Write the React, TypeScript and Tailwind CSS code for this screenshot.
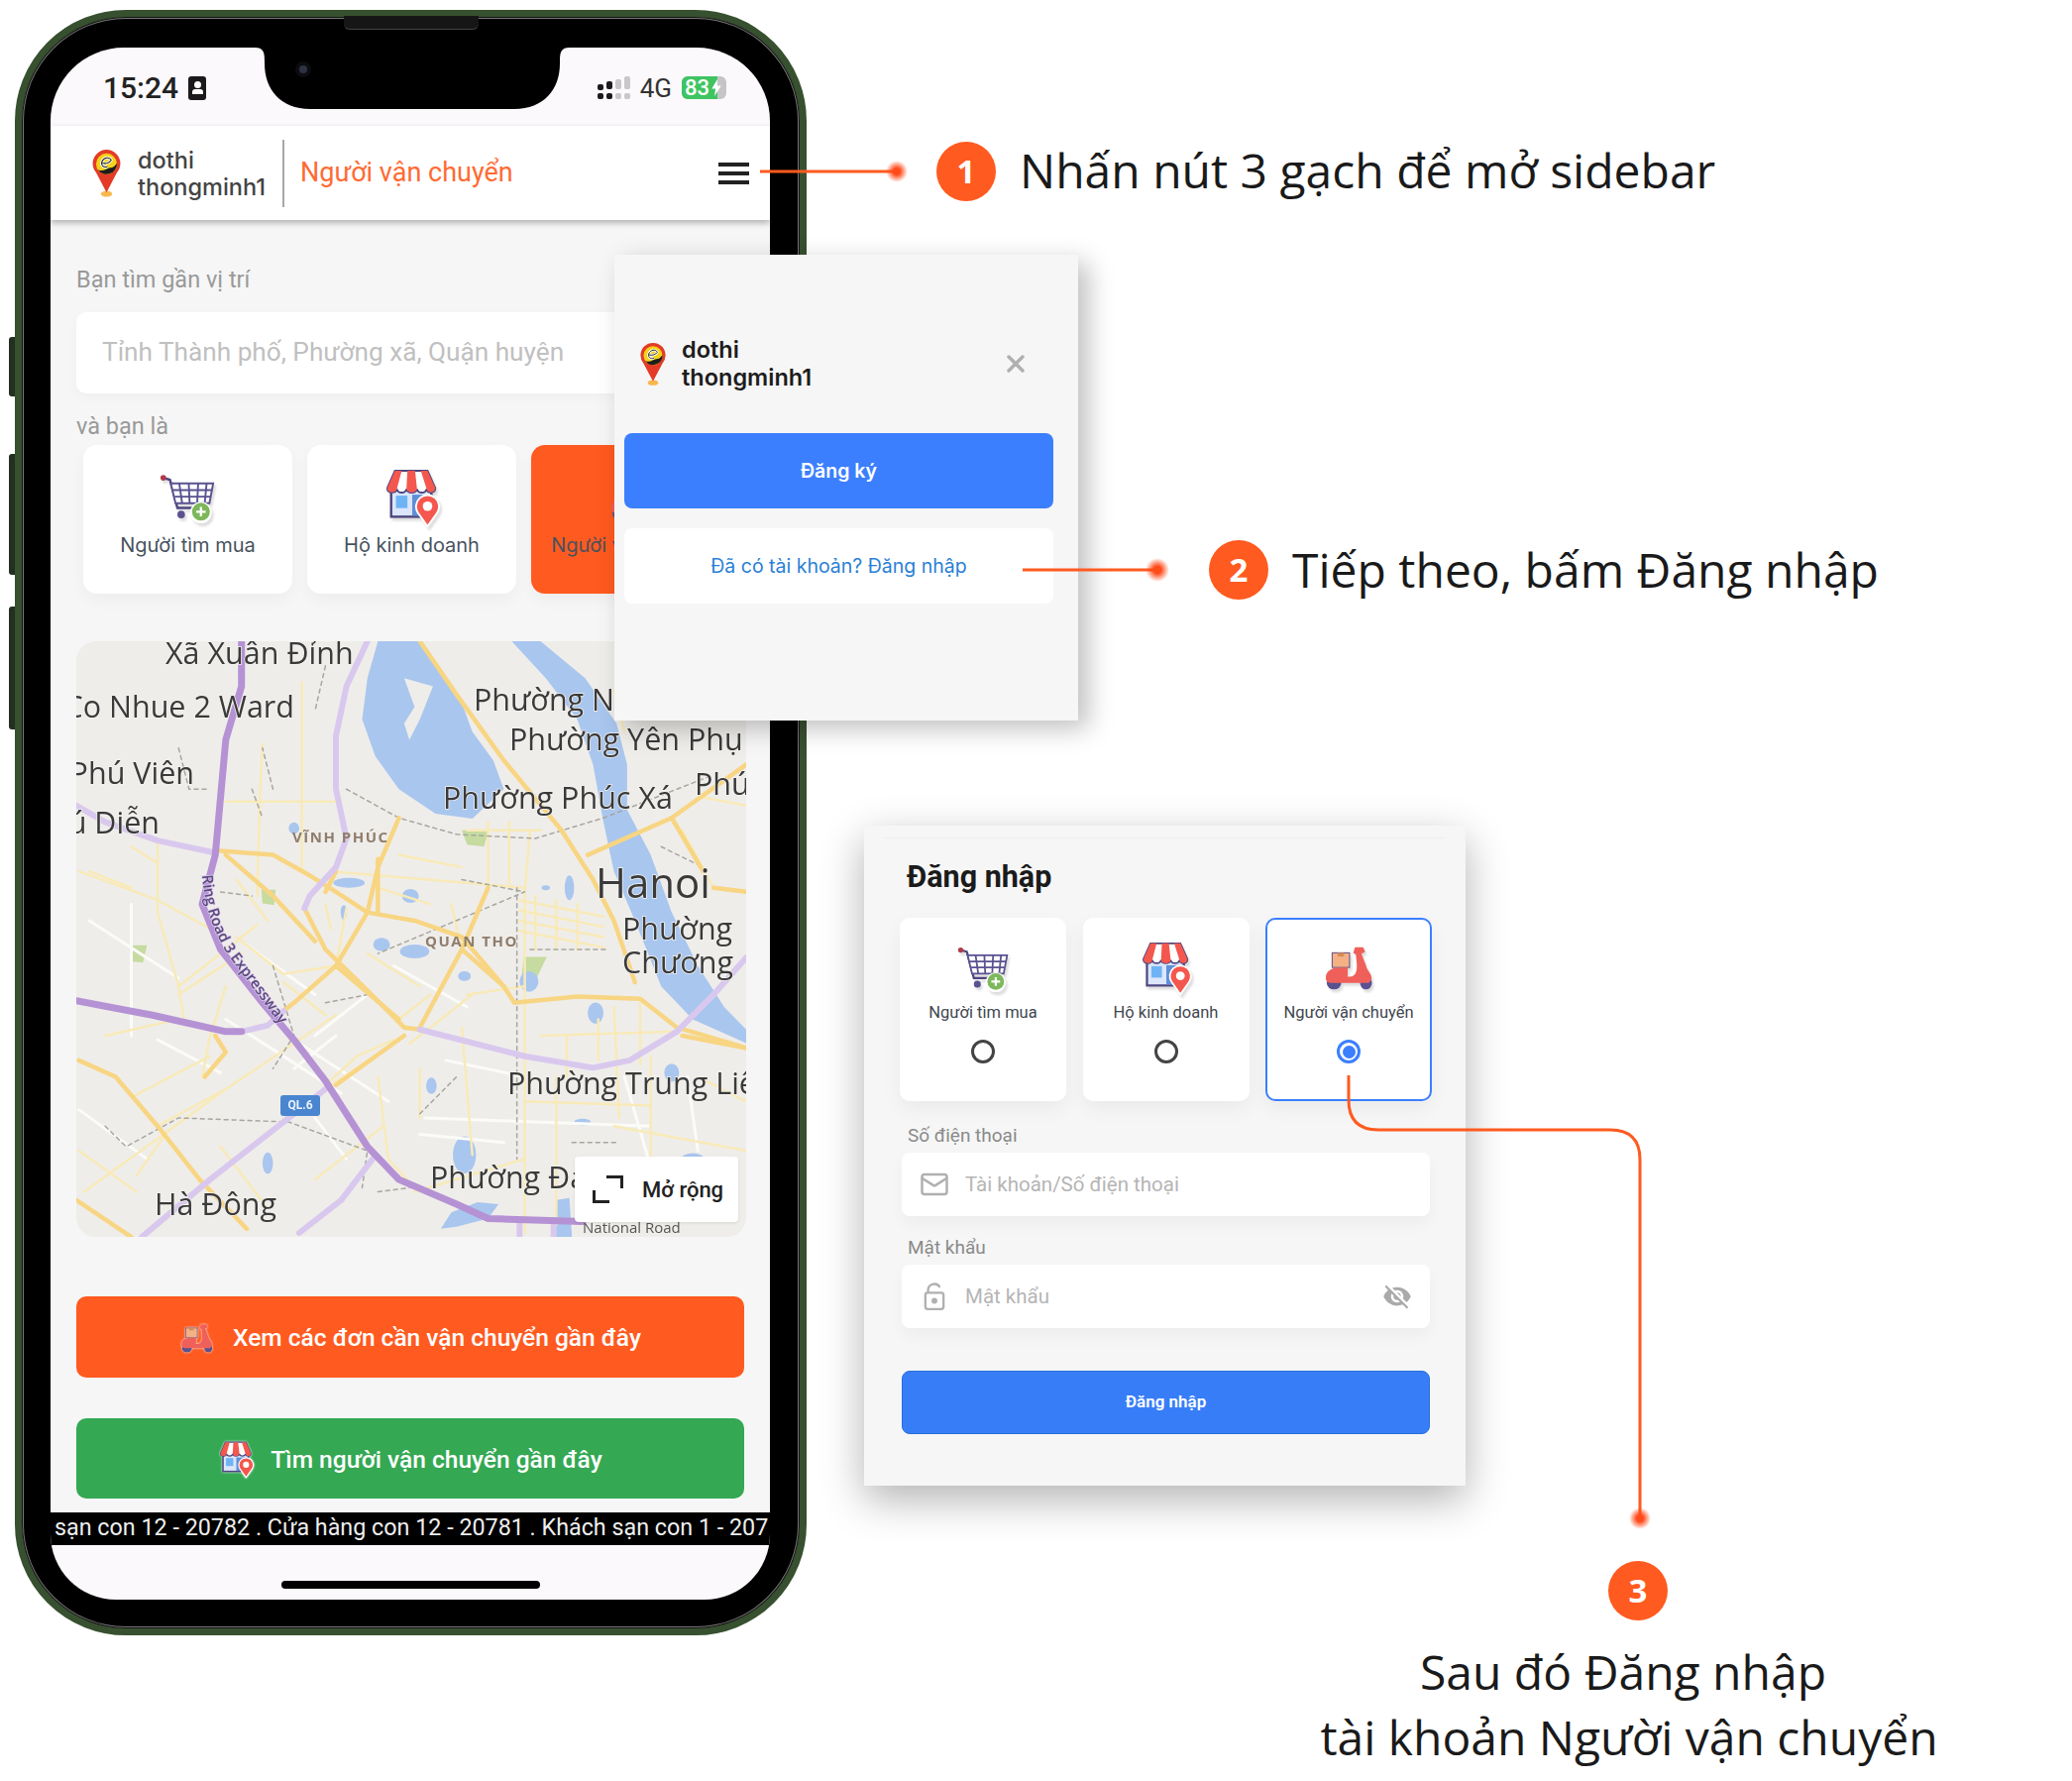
import { Mail, X } from 'lucide-react'
import { MdVisibilityOff } from 'react-icons/md'

function LogoPin({ className }: { className: string }) {
  return (
    <svg viewBox="0 0 30 50" className={className}>
      <ellipse cx="15" cy="46.5" rx="6" ry="3" fill="#f8b84e" />
      <path d="M15 45 L4 24 A14.5 14.5 0 1 1 26 24 Z" fill="#e33b26" />
      <circle cx="15" cy="15" r="11" fill="#f5d21a" />
      <path d="M26 14 A11 11 0 0 1 6 21 C12 24 15 19 19 19 C22 19 24 17 26 14 Z" fill="#1d1d1d" />
      <path d="M10 14 C14 15 18 14 20 11 C18 7 12 8 10 13 C9 17 12 19 16 18" fill="none" stroke="#fff" strokeWidth="3" />
      <path d="M10 14 C14 15 18 14 20 11 C18 7 12 8 10 13 C9 17 12 19 16 18" fill="none" stroke="#1d1d1d" strokeWidth="1.1" />
    </svg>
  )
}

function CartIcon({ className }: { className: string }) {
  return (
    <svg viewBox="0 0 60 52" className={className} fill="none">
      <path d="M4 4 L11 6 L19 36 H46" stroke="#4d4680" strokeWidth="2.5" strokeLinecap="round" />
      <circle cx="4" cy="4" r="3" fill="#b13a4a" />
      <path d="M12 10 H57 L53 31 H17 Z" fill="#fff" stroke="#5a5290" strokeWidth="2" />
      <path d="M21 10 L24 31 M31 10 L32 31 M41 10 L40 31 M50 10 L48 31 M14 17 H56 M16 24 H54" stroke="#5a5290" strokeWidth="2" />
      <circle cx="23" cy="43" r="4" fill="#5a5290" />
      <circle cx="44" cy="41" r="11.5" fill="#fff" />
      <circle cx="44" cy="40" r="9.5" fill="#7cb85a" />
      <path d="M44 35 V45 M39 40 H49" stroke="#fff" strokeWidth="2.4" />
    </svg>
  )
}

function ShopIcon({ className }: { className: string }) {
  return (
    <svg viewBox="0 0 60 62" className={className} fill="none">
      <rect x="8" y="20" width="42" height="30" fill="#dbe6fb" stroke="#4d4680" strokeWidth="2.5" />
      <rect x="13" y="28" width="12" height="13" fill="#6eb4f5" />
      <rect x="30" y="27" width="20" height="22" fill="#5f8fd8" />
      <path d="M12 2 H46 L54 20 C54 26 46 26 45 21 C44 26 36 26 35 21 C34 26 25 26 24 21 C23 26 15 26 14 21 C13 26 4 26 4 20 Z" fill="#fff" stroke="#4d4680" strokeWidth="2" />
      <path d="M12 2 H19 L14 21 C13 26 4 26 4 20 Z M25 2 H33 L35 21 C34 26 25 26 24 21 Z M39 2 H46 L54 20 C54 26 46 26 45 21 Z" fill="#f4574d" />
      <path d="M46 60 L36 46 A12 12 0 1 1 56 46 Z" fill="#f4574d" stroke="#fff" strokeWidth="2" />
      <circle cx="46" cy="39" r="5" fill="#fff" />
    </svg>
  )
}

function ScooterIcon({ className }: { className: string }) {
  return (
    <svg viewBox="0 0 56 52" className={className} fill="none">
      <ellipse cx="12" cy="41" rx="8" ry="7" fill="#5a5290" />
      <ellipse cx="47" cy="41" rx="6.5" ry="7" fill="#5a5290" />
      <rect x="10" y="8" width="19" height="16" fill="#f4b183" stroke="#6a5a8a" strokeWidth="1.2" />
      <path d="M16 8 H23 V12 H16 Z" fill="#d98a58" />
      <path d="M3 35 C3 28 10 24 17 24 H27 V34 C33 35 37 32 37 22 L36 10 L33 8 L35 2 H44 L46 7 L42 9 L47 22 C48 28 54 31 53 37 L50 41 H10 C5 41 3 39 3 35 Z" fill="#f0605a" />
    </svg>
  )
}

function RoleCard({ icon, label, active }: { icon: React.ReactNode; label: string; active?: boolean }) {
  return (
    <div className={`w-[211px] h-[150px] rounded-[14px] flex flex-col items-center pt-[24px] shadow-[0_6px_16px_rgba(0,0,0,0.04)] ${active ? 'bg-[#ff5a1f]' : 'bg-white'}`}>
      <div className="h-[60px] flex items-center justify-center drop-shadow-[2px_3px_1px_rgba(0,0,0,0.13)]">{icon}</div>
      <div className="mt-[4px] text-[20px] leading-[26px] text-[#47525e] whitespace-nowrap">{label}</div>
    </div>
  )
}

function LoginRole({ icon, label, active }: { icon: React.ReactNode; label: string; active?: boolean }) {
  return (
    <div className={`w-[168px] shrink-0 h-[185px] rounded-[10px] bg-white flex flex-col items-center shadow-[0_8px_20px_rgba(0,0,0,0.05)] ${active ? 'border-2 border-[#3b7ffe] pt-[22px]' : 'pt-[24px]'}`}>
      <div className="h-[55px] flex items-center justify-center drop-shadow-[2px_3px_1px_rgba(0,0,0,0.13)]">{icon}</div>
      <div className="mt-[6px] text-[16.5px] leading-[22px] text-[#3f4750] whitespace-nowrap">{label}</div>
      {active ? (
        <div className="mt-[16px] w-[24px] h-[24px] rounded-full border-[3px] border-[#3b7ffe] flex items-center justify-center">
          <div className="w-[13px] h-[13px] rounded-full bg-[#3b7ffe]" />
        </div>
      ) : (
        <div className="mt-[16px] w-[24px] h-[24px] rounded-full border-[3px] border-[#444]" />
      )}
    </div>
  )
}

const water = [
  '720,40 700,130 690,230 715,320 760,400 830,460 900,472 960,400 940,330 900,260 880,190 850,130 800,40',
  '975,40 1040,130 1100,230 1130,340 1150,480 1170,600 1210,720 1260,880 1320,960 1422,1018 1422,985 1380,930 1330,830 1280,700 1240,560 1195,450 1195,340 1175,240 1115,130 1030,40',
  '840,1470 860,1430 910,1405 950,1410 930,1445 870,1465',
  '1060,1400 1085,1395 1090,1490 1055,1490',
]
const ponds: [number, number, number, number][] = [
  [665, 628, 30, 12], [782, 660, 16, 17], [727, 778, 16, 16], [790, 795, 28, 17], [885, 855, 12, 12],
  [1008, 868, 18, 25], [1135, 945, 15, 26], [822, 1122, 10, 20], [885, 1290, 22, 45], [1280, 1090, 14, 22],
  [1110, 1210, 16, 8], [1040, 640, 8, 6], [1085, 640, 9, 30], [510, 1310, 10, 26], [560, 495, 10, 14], [655, 700, 6, 18], [1320, 1300, 22, 14],
]
const greens = [
  '498,645 525,645 522,682 500,678',
  '246,780 280,780 272,822 250,820',
  '998,808 1042,808 1015,880 992,880',
  '880,500 932,498 922,540 890,535',
]
const paleRoads = [
  '150,600 300,670 430,760', '340,880 490,730', '575,140 575,600', '300,530 300,700 340,880 350,960',
  '620,1130 760,1010', '720,1100 740,1300 790,1370', '500,290 495,420 490,660', '430,430 650,430',
  '160,1380 430,1130 640,950', '430,880 400,1000 385,1100', '630,600 1000,640', '1000,640 1000,1480',
  '990,670 1150,710', '990,695 1150,735', '990,720 1150,760', '990,745 1150,785', '1020,660 1020,790', '1060,670 1060,790', '1100,680 1100,790',
  '890,500 1030,500', '930,480 930,630', '970,480 970,640', '1010,500 1000,650', '1080,1000 1080,1100', '1170,930 1180,1200',
  '1170,1220 1422,1280', '1030,1000 1290,990', '780,1020 900,900', '880,980 900,1290', '660,690 640,830', '760,560 880,590',
  '170,600 250,640', '250,540 300,580', '450,760 540,850 640,830', '460,800 340,900', '540,870 620,950', '620,1120 680,1050 750,1010',
  '430,1130 300,1220', '150,1280 260,1380', '320,1230 260,1340', '420,1270 510,1420', '600,1350 730,1220', '790,1380 1000,1300',
  '1060,1100 1060,1460', '1240,1050 1240,1330', '1330,1100 1422,1160', '1000,1160 1240,1170', '1140,960 1140,1060', '1220,920 1220,1070',
  '800,1080 800,1200', '890,900 1000,880', '720,640 820,680', '860,680 880,790', '620,680 630,740', '1300,500 1360,640', '1340,420 1422,440',
  '1170,160 1190,260', '450,620 510,720', '700,800 800,880', '820,900 760,960', '200,1000 340,960', '250,1150 400,1050',
]
const whiteRoads = [
  '560,1010 740,1160', '430,960 650,1140', '600,1000 700,900', '170,720 340,860', '810,1200 1240,1220', '250,680 250,1000', '1190,1100 1240,1320',
  '560,1080 640,1000', '470,780 600,900', '750,830 890,930', '1310,1100 1330,1280', '850,1060 1000,1100', '150,1180 280,1300', '600,1200 660,1300',
  '300,1010 420,1090', '800,1240 960,1260',
]
const mainRoads = [
  '420,550 520,560 590,610 640,650 700,700 790,720 880,760 960,880 980,920 1100,905 1220,910 1290,980 1422,1030',
  '760,470 720,590 700,700 640,830 560,920 520,960',
  '580,690 620,790 700,890 770,980 800,985',
  '930,640 880,790 800,980',
  '770,1000 640,1120',
  '1070,500 1130,620 1170,720 1210,870',
  '1120,560 1280,470 1422,340',
  '1360,640 1422,650',
  '150,1060 220,1100 300,1220 380,1350 470,1470',
  '145,1400 250,1490',
  '800,40 870,170 960,330 1070,500',
  '1300,1000 1422,1030',
  '1280,470 1340,600',
  '640,830 760,960', '880,790 960,880', '430,560 520,660 600,770', '640,600 620,650', '410,1000 430,1040 390,1100', '720,570 720,700',
]
const lightHighways = [
  '700,40 660,150 640,270 640,400 660,520 640,590 590,660 580,690',
  '145,440 200,480 300,525 410,555',
  '460,990 510,975 540,940',
  '800,985 1000,1050 1130,1078 1200,1060 1290,990 1360,900 1422,810',
  '270,1490 400,1350 540,1210 620,1130',
  '570,1480 650,1400 710,1300',
  '1055,1450 1055,1490',
  '990,1450 990,1490',
]
const mainHighways = [
  '460,40 460,150 430,280 410,560 385,680 420,790 500,920 560,1010 620,1110 700,1270 760,1350 870,1410 930,1445 1110,1452',
  '145,915 290,950 430,990 460,990',
]
const rails = [
  '660,400 760,470 870,510 1020,520 1150,470 1350,370', '880,620 1000,650 720,800', '985,640 985,1300',
  '520,830 560,1000 520,1080', '200,1220 240,1270 340,1200 550,1210 700,1280 690,1370', '1010,790 1160,790',
  '340,300 360,400 400,400', '620,100 600,210', '520,400 500,300', '720,1380 780,1370', '800,1190 870,1100',
  '1260,540 1340,590', '1090,1260 1180,1260', '420,650 480,660', '620,920 700,900', '480,400 500,470',
]

function Poly({ pts, color, w, dash }: { pts: string; color: string; w: number; dash?: string }) {
  return (
    <polyline
      points={pts}
      fill="none"
      stroke={color}
      strokeWidth={w}
      strokeDasharray={dash}
      strokeLinejoin="round"
      strokeLinecap="round"
      vectorEffect="non-scaling-stroke"
    />
  )
}

const mapLabels: { t: string; x: number; y: number; end?: boolean }[] = [
  { t: 'Xã Xuân Đỉnh', x: 90, y: 15 },
  { t: 'Co Nhue 2 Ward', x: 220, y: 69, end: true },
  { t: 'Phú Viên', x: 119, y: 136, end: true },
  { t: 'Phú Diễn', x: 84, y: 186, end: true },
  { t: 'Phường Nguyễn', x: 401, y: 62 },
  { t: 'Phường Yên Phụ', x: 437, y: 102 },
  { t: 'Phường Phúc Xá', x: 370, y: 161 },
  { t: 'Phú', x: 624, y: 147 },
  { t: 'Phường', x: 551, y: 293 },
  { t: 'Chương', x: 551, y: 327 },
  { t: 'Phường Trung Liệt', x: 435, y: 449 },
  { t: 'Phường Đại', x: 357, y: 544 },
  { t: 'Hà Đông', x: 79, y: 571 },
]

function MapDrawing() {
  return (
    <svg viewBox="0 0 676 601" className="w-full h-full blur-[0.6px]">
      <rect width="676" height="601" fill="#efedea" />
      <g transform="translate(-76.8 -16.6) scale(0.5294 0.4146)">
        {greens.map((p) => <polygon key={p} points={p} fill="#c6dba0" />)}
        {water.map((p) => <polygon key={p} points={p} fill="#a9c6ee" />)}
        <polygon points="770,130 825,150 800,230 780,280 770,240 790,200" fill="#efedea" />
        {ponds.map(([cx, cy, rx, ry]) => <ellipse key={`${cx}-${cy}`} cx={cx} cy={cy} rx={rx} ry={ry} fill="#a9c6ee" />)}
        {whiteRoads.map((p) => <Poly key={p} pts={p} color="#fbfbf8" w={3} />)}
        {paleRoads.map((p) => <Poly key={p} pts={p} color="#f8eab8" w={2.5} />)}
        {rails.map((p) => <Poly key={p} pts={p} color="#a8a69f" w={1.5} dash="4 4" />)}
        {mainRoads.map((p) => <Poly key={p} pts={p} color="#f8d582" w={4.5} />)}
        {lightHighways.map((p) => <Poly key={p} pts={p} color="#d9c8ee" w={6} />)}
        {mainHighways.map((p) => <Poly key={p} pts={p} color="#b592d4" w={7} />)}
      </g>
      <g fontFamily="'Open Sans', sans-serif" fontSize="30.5" fill="#3a3a3a" stroke="#f4f3f0" strokeWidth="1.5" paintOrder="stroke" dominantBaseline="middle">
        {mapLabels.map((l) => (
          <text key={l.t} x={l.x} y={l.y} textAnchor={l.end ? 'end' : 'start'}>{l.t}</text>
        ))}
        <text x={524} y={248} fontSize="42">Hanoi</text>
      </g>
      <g fontFamily="'Open Sans', sans-serif" fontSize="15" fontWeight="700" fill="#8f7d6c" letterSpacing="1.5" dominantBaseline="middle">
        <text x={218} y={199}>VĨNH PHÚC</text>
        <text x={352} y={304}>QUAN THO</text>
      </g>
      <path id="ring3" d="M127 236 C129 265 137 290 152 315 L212 395" fill="none" />
      <text fontFamily="'Open Sans', sans-serif" fontSize="15" fontWeight="600" fill="#5a4a7c" stroke="#d9c8ee" strokeWidth="1.5" paintOrder="stroke">
        <textPath href="#ring3">Ring Road 3 Expressway</textPath>
      </text>
      <rect x="206" y="458" width="40" height="21" rx="3" fill="#4a86d0" />
      <text x="226" y="469" fontFamily="'Roboto', sans-serif" fontSize="12" fontWeight="700" fill="#e8f0fb" textAnchor="middle" dominantBaseline="middle">QL.6</text>
      <text x="511" y="593" fontFamily="'Open Sans', sans-serif" fontSize="15" fill="#555" dominantBaseline="middle">National Road</text>
    </svg>
  )
}

function Signal() {
  return (
    <svg viewBox="0 0 35 24" className="w-[35px] h-[24px]">
      <rect x="0" y="8" width="6" height="6" rx="2" fill="#1c1c1c" />
      <rect x="0" y="17" width="6" height="6" rx="2" fill="#1c1c1c" />
      <rect x="9" y="5" width="6" height="8" rx="2" fill="#1c1c1c" />
      <rect x="9" y="17" width="6" height="6" rx="2" fill="#1c1c1c" />
      <rect x="18" y="3" width="6" height="10" rx="2" fill="#c9c7c9" />
      <rect x="18" y="17" width="6" height="6" rx="2" fill="#c9c7c9" />
      <rect x="27" y="0" width="6" height="13" rx="2" fill="#c9c7c9" />
      <rect x="27" y="17" width="6" height="6" rx="2" fill="#c9c7c9" />
    </svg>
  )
}

function Phone() {
  return (
    <div className="absolute left-[15px] top-[10px] w-[799px] h-[1640px] rounded-[112px] border-[7px] border-[#37502f] bg-black pl-[29px] pt-[31px] shadow-[inset_0_0_0_1px_#111,inset_0_0_0_2px_#777]">
      <div className="absolute left-[325px] -top-[1px] w-[136px] h-[14px] rounded-b-[6px] bg-[#161616] border-b border-[#444]" />
      <div className="relative isolate w-[726px] h-[1566px] rounded-t-[74px] rounded-b-[66px] overflow-hidden bg-[#fbf9fb] flex flex-col">
        <svg viewBox="0 0 318 63" className="absolute left-[206px] top-0 w-[318px] h-[63px]">
          <path d="M0 0 H318 C308 0 308 6 308 16 C308 42 292 62 262 62 H56 C26 62 10 42 10 16 C10 6 10 0 0 0 Z" fill="#000" />
          <circle cx="49" cy="22" r="8" fill="#0c0c10" />
          <circle cx="49" cy="22" r="4" fill="#2d3340" />
        </svg>

        {/* status bar */}
        <div className="h-[79px] shrink-0 flex items-center pl-[53px] pr-[44px] pt-[2px] font-['Roboto']">
          <span className="text-[30px] font-medium leading-none text-[#222]">15:24</span>
          <span className="ml-[10px] w-[18px] h-[24px] rounded-[3px] bg-[#1a1a1a] flex flex-col items-center justify-center">
            <span className="w-[7px] h-[7px] rounded-full bg-white" />
            <span className="mt-[1px] w-[11px] h-[5px] rounded-t-[3px] bg-white" />
          </span>
          <div className="ml-auto flex items-center">
            <Signal />
            <span className="ml-[8px] text-[26px] leading-none text-[#333]">4G</span>
            <div className="ml-[10px] relative w-[45px] h-[23px] rounded-[6px] bg-[#c5c5c5] overflow-hidden">
              <div className="w-[36px] h-full bg-[#3fc463]" />
              <span className="absolute left-[3px] top-0 text-[22px] leading-[23px] font-medium text-white">83</span>
              <svg viewBox="0 0 10 18" className="absolute left-[30px] top-[3px] w-[10px] h-[17px]"><path d="M6 0 L0 10 H4 L3 18 L10 7 H6 Z" fill="#fff" /></svg>
            </div>
          </div>
        </div>

        {/* header */}
        <div className="relative z-10 h-[95px] shrink-0 bg-white shadow-[0_3px_6px_rgba(0,0,0,0.28)] flex items-center pl-[42px] pr-[21px] font-['Inter']">
          <LogoPin className="w-[29px] h-[48px]" />
          <div className="ml-[17px] w-[130px] text-[23.5px] leading-[27px] font-medium text-[#444] whitespace-nowrap">dothi<br />thongminh1</div>
          <div className="ml-[16px] w-[2px] h-[68px] bg-[#a8a8a8]" />
          <div className="ml-[16px] font-['Roboto'] text-[27px] text-[#ff6a33]">Người vận chuyển</div>
          <div className="ml-auto flex flex-col gap-[5px]">
            <span className="w-[31px] h-[4px] bg-[#222]" />
            <span className="w-[31px] h-[4px] bg-[#222]" />
            <span className="w-[31px] h-[4px] bg-[#222]" />
          </div>
        </div>

        {/* page content */}
        <div className="flex-1 bg-[#f6f6f6] px-[26px] pt-[47px] font-['Roboto']">
          <div className="text-[23.5px] leading-[26px] text-[#999]">Bạn tìm gần vị trí</div>
          <div className="mt-[20px] h-[82px] rounded-[10px] bg-white shadow-[0_4px_12px_rgba(0,0,0,0.03)] flex items-center pl-[26px] text-[26.2px] text-[#c0c0c0]">Tỉnh Thành phố, Phường xã, Quận huyện</div>
          <div className="mt-[20px] text-[23.5px] leading-[26px] text-[#999]">và bạn là</div>
          <div className="mt-[6px] ml-[7px] flex gap-[15px] font-['Inter']">
            <RoleCard icon={<CartIcon className="w-[57px] h-[50px]" />} label="Người tìm mua" />
            <RoleCard icon={<ShopIcon className="w-[58px] h-[60px]" />} label="Hộ kinh doanh" />
            <RoleCard icon={<ScooterIcon className="w-[56px] h-[52px]" />} label="Người vận chuyển" active />
          </div>

          <div className="relative mt-[48px] w-[676px] h-[601px] rounded-[20px] overflow-hidden">
            <MapDrawing />
            <div className="absolute left-[503px] top-[520px] w-[165px] h-[66px] rounded-[4px] bg-white flex items-center pl-[18px] shadow-[0_1px_3px_rgba(0,0,0,0.1)]">
              <svg viewBox="0 0 31 28" className="w-[31px] h-[28px]" fill="none" stroke="#222" strokeWidth="3">
                <path d="M14 1.5 H29.5 V13 M1.5 15 V26.5 H17" />
              </svg>
              <span className="ml-[19px] text-[22px] font-medium text-[#222] whitespace-nowrap">Mở rộng</span>
            </div>
          </div>

          <div className="mt-[60px] h-[82px] pt-[3px] rounded-[10px] bg-[#ff5a1f] flex items-center justify-center gap-[19px] text-[24.5px] font-medium text-[#fff]">
            <ScooterIcon className="w-[35px] h-[32px] drop-shadow-[0_0_1px_#fff]" />
            <span>Xem các đơn cần vận chuyển gần đây</span>
          </div>
          <div className="mt-[41px] h-[81px] pt-[3px] rounded-[10px] bg-[#34a853] flex items-center justify-center gap-[16px] text-[24.5px] font-medium text-[#fff]">
            <ShopIcon className="w-[37px] h-[38px] drop-shadow-[0_0_1px_#fff]" />
            <span>Tìm người vận chuyển gần đây</span>
          </div>
        </div>

        {/* ticker */}
        <div className="h-[33px] shrink-0 bg-black pl-[4px] text-[23.3px] leading-[30px] text-[#eee] whitespace-nowrap overflow-hidden font-['Roboto']">
          sạn con 12 - 20782 . Cửa hàng con 12 - 20781 . Khách sạn con 1 - 207
        </div>
        <div className="h-[55px] shrink-0 flex items-end justify-center pb-[11px]">
          <div className="w-[261px] h-[8px] rounded-full bg-black" />
        </div>
      </div>
    </div>
  )
}

function Drawer() {
  return (
    <div className="absolute left-[620px] top-[257px] w-[468px] h-[470px] bg-[#f6f6f6] shadow-[10px_8px_24px_rgba(0,0,0,0.25)] pl-[10px] pr-[25px] pt-[81px] font-['Inter']">
      <div className="h-[58px] flex items-center pl-[16px] pr-[24px]">
        <LogoPin className="w-[26px] h-[45px]" />
        <div className="ml-[16px] text-[23.5px] leading-[28px] font-semibold text-[#1d1d1d]">dothi<br />thongminh1</div>
        <X size={28} strokeWidth={3} className="ml-auto text-[#b0b0b0]" />
      </div>
      <div className="mt-[41px] h-[76px] pt-[2px] rounded-[8px] bg-[#3b7ffe] flex items-center justify-center text-[19.5px] font-semibold text-white">Đăng ký</div>
      <div className="mt-[20px] h-[76px] pt-[1px] rounded-[8px] bg-white flex items-center justify-center text-[19.5px] text-[#2a7fd5]">Đã có tài khoản? Đăng nhập</div>
    </div>
  )
}

function Field({ label, placeholder, icon, trailing, className }: { label: string; placeholder: string; icon: React.ReactNode; trailing?: React.ReactNode; className?: string }) {
  return (
    <div className={className}>
      <div className="pl-[6px] text-[19px] leading-[24px] text-[#8a8a8a]">{label}</div>
      <div className="mt-[5px] h-[64px] rounded-[8px] bg-white shadow-[0_8px_16px_rgba(0,0,0,0.04)] flex items-center pl-[18px] pr-[18px]">
        <div className="w-[30px] flex justify-center">{icon}</div>
        <span className="ml-[16px] text-[20.5px] text-[#b5b5b5]">{placeholder}</span>
        <div className="ml-auto flex">{trailing}</div>
      </div>
    </div>
  )
}

function LoginPanel() {
  return (
    <div className="absolute left-[872px] top-[833px] w-[607px] h-[666px] bg-[#f6f6f6] shadow-[0_14px_40px_rgba(0,0,0,0.3)] pt-[12px] px-[36px] font-['Roboto']">
      <div className="-mx-[16px] h-[1px] bg-[#efefef]" />
      <div className="mt-[21px] pl-[7px] text-[30.5px] leading-[36px] font-bold text-[#1b1b1b]">Đăng nhập</div>
      <div className="mt-[23px] flex gap-[16.5px]">
        <LoginRole icon={<CartIcon className="w-[55px] h-[46px]" />} label="Người tìm mua" />
        <LoginRole icon={<ShopIcon className="w-[56px] h-[55px]" />} label="Hộ kinh doanh" />
        <LoginRole icon={<ScooterIcon className="w-[52px] h-[48px]" />} label="Người vận chuyển" active />
      </div>
      <Field
        className="mt-[23px] ml-[2px] w-[533px]"
        label="Số điện thoại"
        placeholder="Tài khoản/Số điện thoại"
        icon={<Mail size={30} strokeWidth={2} className="text-[#b0b0b0]" />}
      />
      <Field
        className="mt-[20px] ml-[2px] w-[533px]"
        label="Mật khẩu"
        placeholder="Mật khẩu"
        icon={
          <svg viewBox="0 0 24 32" className="w-[22px] h-[30px]" fill="none" stroke="#b0b0b0" strokeWidth="2.5">
            <path d="M5 12 V8 A7 7 0 0 1 18 6" />
            <rect x="2" y="12" width="20" height="18" rx="2.5" />
            <circle cx="12" cy="21" r="2" fill="#b0b0b0" />
          </svg>
        }
        trailing={<MdVisibilityOff size={30} className="text-[#aaa]" />}
      />
      <div className="mt-[43px] ml-[2px] w-[533px] h-[64px] rounded-[8px] bg-[#387df8] border border-[#2570d8] flex items-center justify-center text-[17px] font-semibold text-white">Đăng nhập</div>
    </div>
  )
}

function Badge({ n, className }: { n: number; className: string }) {
  return (
    <div className={`absolute w-[60px] h-[60px] rounded-full bg-[#ff5a1f] flex items-center justify-center text-[33px] font-bold text-white ${className}`}>{n}</div>
  )
}

function Connectors() {
  return (
    <svg viewBox="0 0 2091 1797" className="absolute left-0 top-0 w-[2091px] h-[1797px] pointer-events-none" fill="none">
      <defs>
        <radialGradient id="glow">
          <stop offset="0.3" stopColor="#ff4a1a" />
          <stop offset="1" stopColor="#ff4a1a" stopOpacity="0" />
        </radialGradient>
      </defs>
      <path d="M767 173 H905" stroke="#ff5a1f" strokeWidth="3" />
      <path d="M1032 575 H1168" stroke="#ff5a1f" strokeWidth="3" />
      <path d="M1361 1085 V1110 Q1361 1140 1391 1140 H1625 Q1655 1140 1655 1170 V1532" stroke="#ff5a1f" strokeWidth="3" />
      <circle cx="905" cy="173" r="11" fill="url(#glow)" />
      <circle cx="1168" cy="575" r="12" fill="url(#glow)" />
      <circle cx="1655" cy="1532" r="11" fill="url(#glow)" />
    </svg>
  )
}

export default function App() {
  return (
    <div className="relative w-[2091px] h-[1797px] overflow-hidden bg-white">
      <div className="absolute left-[9px] top-[340px] w-[8px] h-[60px] rounded-l-[3px] bg-[#22301f]" />
      <div className="absolute left-[9px] top-[458px] w-[8px] h-[122px] rounded-l-[3px] bg-[#22301f]" />
      <div className="absolute left-[9px] top-[612px] w-[8px] h-[124px] rounded-l-[3px] bg-[#22301f]" />
      <Phone />
      <Drawer />
      <LoginPanel />
      <Connectors />

      <div className="font-['Open_Sans'] text-[48px] leading-[66px] text-[#1a1a1a]">
        <Badge n={1} className="left-[945px] top-[143px]" />
        <div className="absolute left-[1029px] top-[139px] whitespace-nowrap">Nhấn nút 3 gạch để mở sidebar</div>
        <Badge n={2} className="left-[1220px] top-[545px]" />
        <div className="absolute left-[1304px] top-[542px] whitespace-nowrap">Tiếp theo, bấm Đăng nhập</div>
        <Badge n={3} className="left-[1623px] top-[1575px]" />
        <div className="absolute left-[1244px] top-[1654px] w-[800px] text-center">
          <div className="-translate-x-[6px]">Sau đó Đăng nhập</div>
          <div>tài khoản Người vận chuyển</div>
        </div>
      </div>
    </div>
  )
}
